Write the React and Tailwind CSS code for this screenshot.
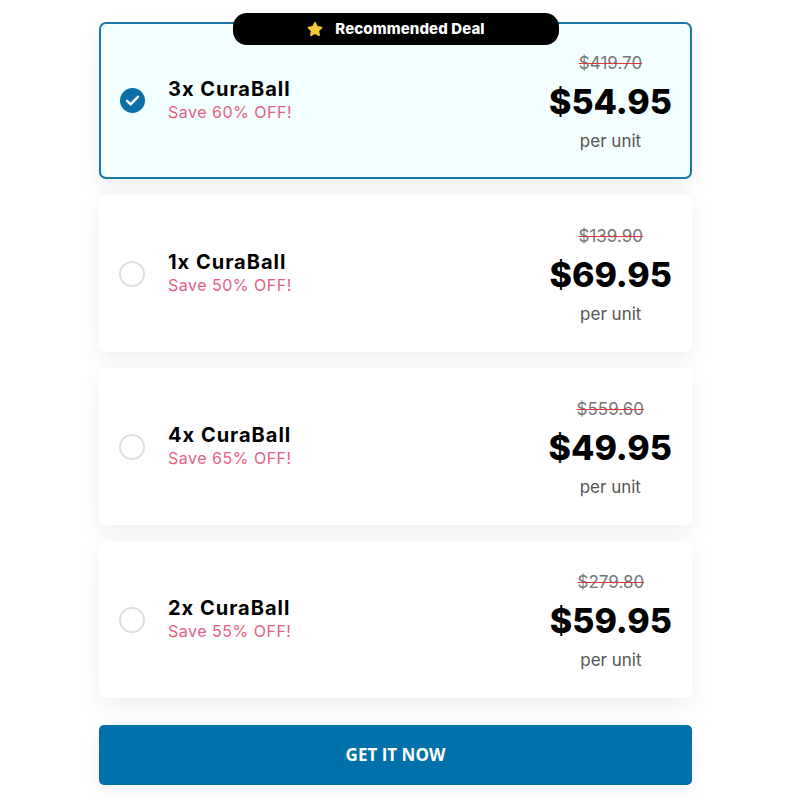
import { FaStar } from "react-icons/fa"

const offers = [
  { qty: "3x", save: "60", old: "$419.70", price: "$54.95", best: true },
  { qty: "1x", save: "50", old: "$139.90", price: "$69.95" },
  { qty: "4x", save: "65", old: "$559.60", price: "$49.95" },
  { qty: "2x", save: "55", old: "$279.80", price: "$59.95" },
]

const Check = () => (
  <svg width="25" height="25" viewBox="0 0 24 24">
    <circle cx="12" cy="12" r="12" fill="#0a6fa6" />
    <path d="M6.8 12.4l3.4 3.3 7-7.2" fill="none" stroke="#fff" strokeWidth="2.4" strokeLinecap="round" strokeLinejoin="round" />
  </svg>
)

const Offer = ({ o }) => (
  <div
    className={
      "relative flex items-center h-[157px] rounded-[7px] border-2 pl-[18px] pr-[18px] " +
      (o.best
        ? "bg-[#f3fefe] border-[#1a77aa] shadow-[0_10px_24px_rgba(0,0,0,0.07)]"
        : "bg-white border-transparent shadow-[0_8px_24px_rgba(0,0,0,0.07)]")
    }
  >
    {o.best && (
      <div className="absolute left-[132px] -top-[11px] w-[326px] h-[32px] rounded-[14px] bg-black flex items-center justify-center gap-[12px]">
        <FaStar className="text-[#f7c73a] text-[16px]" />
        <span className="text-white text-[15px] font-extrabold tracking-[0.1px]">Recommended Deal</span>
      </div>
    )}
    <div className="w-[26px] flex justify-center">
      {o.best ? <Check /> : <div className="w-[26px] h-[26px] rounded-full border-2 border-[#dedede]" />}
    </div>
    <div className="ml-[23px] flex flex-col -mt-[2px]">
      <span className="text-[20px] font-bold leading-[24px] text-black tracking-[1px]">{o.qty} CuraBall</span>
      <span className="text-[16px] leading-[22px] text-[#e5607f] tracking-[0.5px]">Save {o.save}% OFF!</span>
    </div>
    <div className="ml-auto pt-[3px] flex flex-col items-center">
      <span className="text-[17px] leading-[24px] text-[#777] line-through decoration-[#d43a3a]">{o.old}</span>
      <span className="text-[34px] font-extrabold leading-[54px] text-black">{o.price}</span>
      <span className="text-[17px] leading-[24px] text-[#555]">per unit</span>
    </div>
  </div>
)

const App = () => {
  return (
    <div className="min-h-screen bg-white" style={{ fontFamily: "Inter, 'Open Sans', sans-serif" }}>
      <div className="w-[593px] ml-[99px] pt-[22px] flex flex-col">
        <div className="flex flex-col gap-[16px]">
          {offers.map((o) => (
            <Offer key={o.qty} o={o} />
          ))}
        </div>
        <button className="mt-[27px] h-[60px] w-full rounded-[5px] bg-[#0071aa] text-white text-[17px] font-bold shadow-[0_6px_18px_rgba(0,0,0,0.06)]" style={{ fontFamily: "'Open Sans', sans-serif" }}>
          GET IT NOW
        </button>
      </div>
    </div>
  )
}

export default App
